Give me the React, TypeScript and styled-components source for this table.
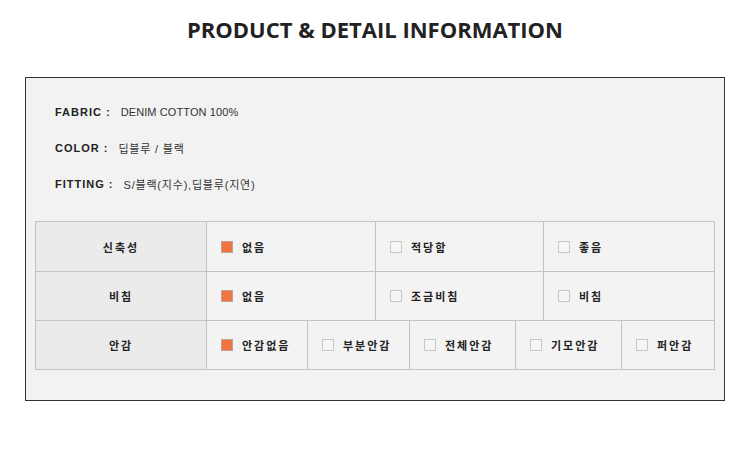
import styled, { createGlobalStyle } from 'styled-components';

const GlobalStyle = createGlobalStyle`
  body {
    margin: 0;
    background: #ffffff;
    font-family: "Liberation Sans", "Noto Sans CJK KR", sans-serif;
    color: #222222;
  }
`;

const Page = styled.div`
  width: 750px;
  padding-top: 14px;
`;

const Title = styled.h2`
  margin: 0;
  text-align: center;
  font-family: "Open Sans", "Noto Sans", sans-serif;
  font-weight: 700;
  font-size: 22px;
  line-height: 30px;
  color: #222222;
`;

const InfoBox = styled.section`
  margin: 33px 0 0 25px;
  width: 700px;
  box-sizing: border-box;
  border: 1px solid #333333;
  background: #f2f2f2;
  padding: 16px 9px 30px;
`;

const InfoList = styled.ul`
  list-style: none;
  margin: 0 0 19px;
  padding: 0 0 0 20px;
`;

const InfoItem = styled.li`
  height: 36px;
  display: flex;
  align-items: center;
  font-size: 11px;
  color: #222222;
`;

const InfoLabel = styled.span`
  font-weight: 700;
  letter-spacing: 1px;
  margin-right: 10px;
`;

// hangul in the reference font runs wider than the latin
const InfoValue = styled.span<{ $tracking: number }>`
  letter-spacing: ${({ $tracking }) => $tracking}px;
  color: #333333;
`;

const Table = styled.div`
  border-top: 1px solid #c3c3c3;
  border-left: 1px solid #c3c3c3;
  width: 680px;
  box-sizing: border-box;
`;

const Row = styled.div<{ $cols: string; $height: number }>`
  display: grid;
  grid-template-columns: ${({ $cols }) => $cols};
  height: ${({ $height }) => $height}px;
`;

const Cell = styled.div`
  border-right: 1px solid #c3c3c3;
  border-bottom: 1px solid #c3c3c3;
  background: #f3f3f3;
  display: flex;
  align-items: center;
  padding-left: 14px;
  font-family: "Noto Sans CJK KR", "Liberation Sans", sans-serif;
  font-size: 11px;
  font-weight: 700;
  letter-spacing: 2px;
  color: #222222;
`;

const HeadCell = styled(Cell)`
  background: #ebebeb;
  justify-content: center;
  padding-left: 0;
`;

const Check = styled.span<{ $on?: boolean }>`
  width: 12px;
  height: 12px;
  box-sizing: border-box;
  border: 1px solid ${({ $on }) => ($on ? '#b9a49a' : '#c6c6c6')};
  background: ${({ $on }) => ($on ? '#f07340' : '#f6f6f6')};
  margin-right: 9px;
  flex-shrink: 0;
`;

const info = [
  { label: 'FABRIC :', value: 'DENIM COTTON 100%', tracking: 0.1 },
  { label: 'COLOR :', value: '딥블루 / 블랙', tracking: 0.8 },
  { label: 'FITTING :', value: 'S/블랙(지수),딥블루(지연)', tracking: 0.8 },
];

const rows = [
  {
    title: '신축성',
    cols: '171px 169px 168px 171px',
    height: 50,
    options: ['없음', '적당함', '좋음'],
  },
  {
    title: '비침',
    cols: '171px 169px 168px 171px',
    height: 49,
    options: ['없음', '조금비침', '비침'],
  },
  {
    title: '안감',
    cols: '171px 101px 102px 106px 106px 93px',
    height: 49,
    options: ['안감없음', '부분안감', '전체안감', '기모안감', '퍼안감'],
  },
];

const App = () => {
  return (
    <Page>
      <GlobalStyle />
      <Title>PRODUCT &amp; DETAIL INFORMATION</Title>
      <InfoBox>
        <InfoList>
          {info.map((item) => (
            <InfoItem key={item.label}>
              <InfoLabel>{item.label}</InfoLabel>
              <InfoValue $tracking={item.tracking}>{item.value}</InfoValue>
            </InfoItem>
          ))}
        </InfoList>
        <Table>
          {rows.map((row) => (
            <Row key={row.title} $cols={row.cols} $height={row.height}>
              <HeadCell>{row.title}</HeadCell>
              {row.options.map((option, index) => (
                <Cell key={option}>
                  <Check $on={index === 0} />
                  {option}
                </Cell>
              ))}
            </Row>
          ))}
        </Table>
      </InfoBox>
    </Page>
  );
};

export default App;
